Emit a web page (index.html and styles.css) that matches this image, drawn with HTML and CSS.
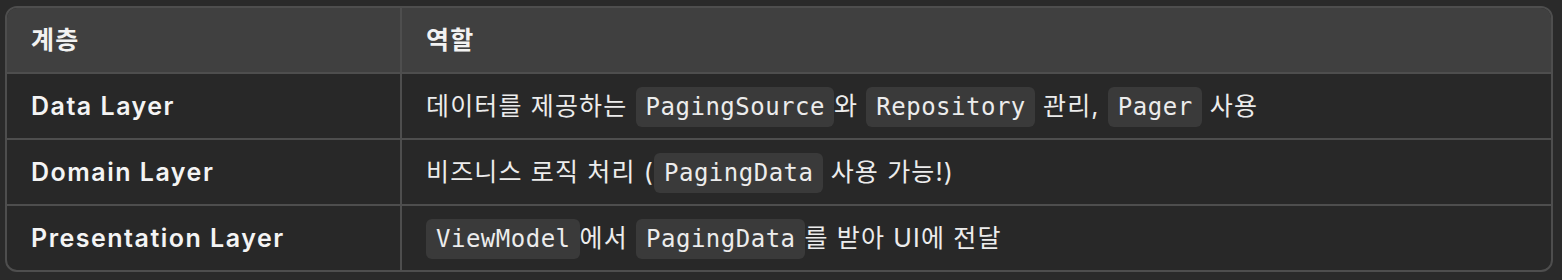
FILE: index.html
```html
<!DOCTYPE html>
<html lang="ko">
<head>
<meta charset="utf-8">
<link rel="stylesheet" href="styles.css">
</head>
<body>
<div class="table-wrap">
  <table class="layers">
    <thead>
      <tr><th class="col-layer">계층</th><th>역할</th></tr>
    </thead>
    <tbody>
      <tr><td class="name">Data Layer</td><td>데이터를 제공하는 <code>PagingSource</code>와 <code>Repository</code> 관리, <code>Pager</code> 사용</td></tr>
      <tr><td class="name">Domain Layer</td><td>비즈니스 로직 처리 (<code>PagingData</code> 사용 가능!)</td></tr>
      <tr><td class="name">Presentation Layer</td><td><code>ViewModel</code>에서 <code>PagingData</code>를 받아 UI에 전달</td></tr>
    </tbody>
  </table>
</div>
</body>
</html>
```
FILE: styles.css
```css
html, body {
  margin: 0;
  padding: 0;
  background: #2a2a2a;
}
body {
  padding: 6px 9px 0 5px;
  font-family: Inter, "Noto Sans CJK KR", sans-serif;
  color: #ececec;
}
.table-wrap {
  border: 2px solid #4e4e4e;
  border-radius: 12px;
  overflow: hidden;
  background: #282828;
}
.layers {
  width: 100%;
  border-collapse: collapse;
  border-spacing: 0;
}
.layers th, .layers td {
  text-align: left;
  padding: 0 24px;
  height: 64px;
  font-size: 25px;
  letter-spacing: 1.15px;
  line-height: 30px;
  vertical-align: middle;
  white-space: nowrap;
}
.layers th {
  background: #404040;
  font-weight: 600;
  color: #f2f2f2;
}
.layers th + th, .layers td + td {
  border-left: 2px solid #4e4e4e;
}
.layers tbody tr td {
  border-top: 2px solid #4e4e4e;
}
.col-layer {
  width: 345px;
}
.layers td.name {
  font-weight: 600;
  letter-spacing: 1.5px;
  color: #f4f4f4;
}
.layers td:not(.name) {
  font-weight: 400;
  color: #ececec;
}
code {
  font-family: "DejaVu Sans Mono", monospace;
  font-size: 24px;
  letter-spacing: 0.5px;
  background: #3a3a3a;
  border-radius: 6px;
  padding: 6px 9px 6px 10px;
  color: #ececec;
}
```
